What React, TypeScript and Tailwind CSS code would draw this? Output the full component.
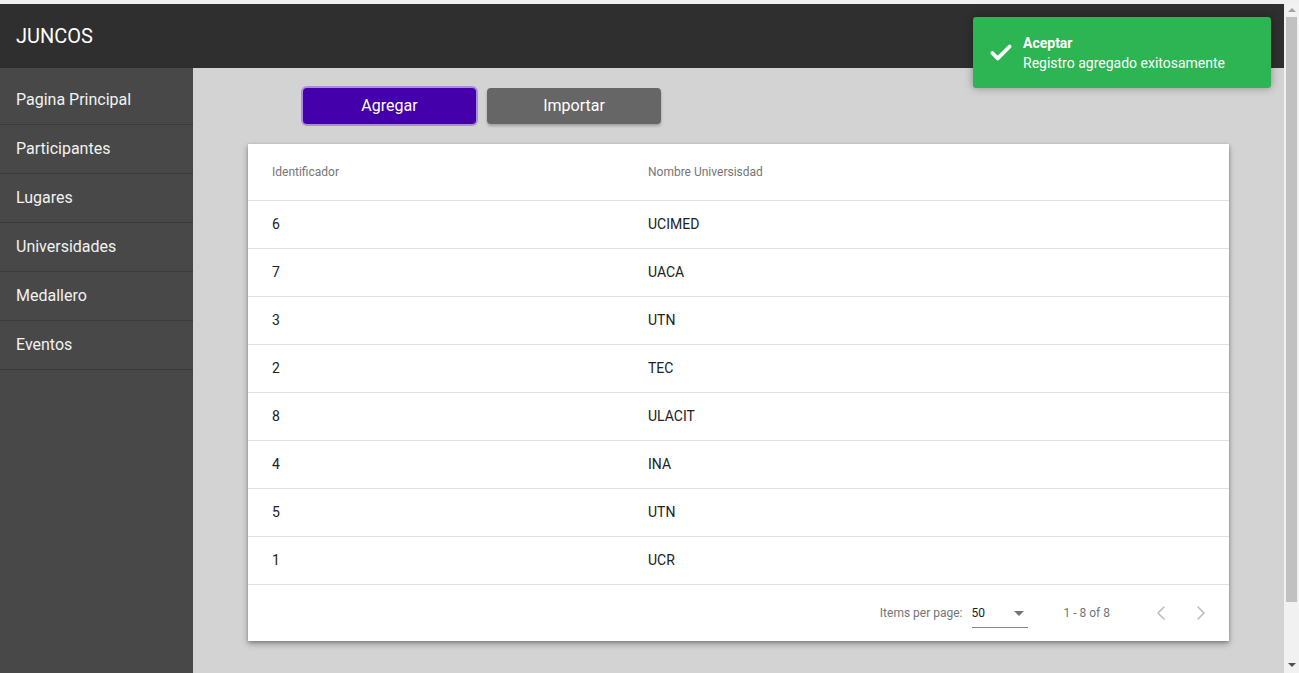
import { Check, ChevronLeft, ChevronRight } from "lucide-react";

const menu = ["Pagina Principal", "Participantes", "Lugares", "Universidades", "Medallero", "Eventos"];

const rows = [
  { id: 6, name: "UCIMED" },
  { id: 7, name: "UACA" },
  { id: 3, name: "UTN" },
  { id: 2, name: "TEC" },
  { id: 8, name: "ULACIT" },
  { id: 4, name: "INA" },
  { id: 5, name: "UTN" },
  { id: 1, name: "UCR" },
];

export default function App() {
  return (
    <div className="relative flex h-[673px] w-[1299px] flex-col overflow-hidden bg-[#f0f0f0] font-['Roboto',sans-serif]">
      <div className="h-[4px] shrink-0" />
      <div className="flex min-h-0 flex-1">
        <div className="flex min-w-0 flex-1 flex-col">
          {/* Toolbar */}
          <header className="flex h-[64px] shrink-0 items-center bg-[#2f2f2f] px-[16px]">
            <span className="text-[20px] text-white">JUNCOS</span>
          </header>

          <div className="flex min-h-0 flex-1">
            {/* Sidebar */}
            <nav className="w-[193px] shrink-0 bg-[#484848] pt-[8px]">
              {menu.map((item) => (
                <div
                  key={item}
                  className="flex h-[49px] items-center border-b border-[#3b3b3b] px-[16px] text-[16px] text-[#f2f2f2]"
                >
                  {item}
                </div>
              ))}
            </nav>

            {/* Content */}
            <main className="min-w-0 flex-1 bg-[#d3d3d3]">
              <div className="flex gap-[11px] pl-[110px] pt-[20px]">
                <button className="h-[36px] w-[173px] rounded-[4px] bg-[#4400aa] text-[16px] text-white ring-2 ring-[#a98ee0]">
                  Agregar
                </button>
                <button className="h-[36px] w-[174px] rounded-[4px] bg-[#666666] text-[16px] text-white shadow-[0_2px_3px_rgba(0,0,0,0.25)]">
                  Importar
                </button>
              </div>

              <div className="mx-[55px] mt-[20px] bg-white shadow-[0_3px_6px_rgba(0,0,0,0.3),0_1px_3px_rgba(0,0,0,0.2)]">
                <div className="flex h-[57px] items-center border-b border-[#e0e0e0] px-[24px] text-[12px] text-[#757575]">
                  <div className="w-[376px]">Identificador</div>
                  <div>Nombre Universisdad</div>
                </div>
                {rows.map((r, i) => (
                  <div
                    key={i}
                    className="flex h-[48px] items-center border-b border-[#e0e0e0] px-[24px] text-[14px] text-[#212121]"
                  >
                    <div className="w-[376px]">{r.id}</div>
                    <div>{r.name}</div>
                  </div>
                ))}
                <div className="flex h-[56px] items-center justify-end pr-[16px] text-[12px] text-[#757575]">
                  <span>Items per page:</span>
                  <div className="ml-[9px] mt-[2px] flex h-[27px] w-[56px] items-center justify-between border-b border-[#8a8a8a] pb-[1px] text-[#212121]">
                    <span>50</span>
                    <svg width="10" height="5" viewBox="0 0 10 5" className="mr-[4px]">
                      <path d="M0 0 L10 0 L5 5 Z" fill="#757575" />
                    </svg>
                  </div>
                  <span className="ml-[36px]">1 - 8 of 8</span>
                  <div className="ml-[39px] flex gap-[16px] text-[#bdbdbd]">
                    <ChevronLeft size={24} strokeWidth={1.6} />
                    <ChevronRight size={24} strokeWidth={1.6} />
                  </div>
                </div>
              </div>
            </main>
          </div>
        </div>

        {/* Scrollbar */}
        <div className="flex w-[15px] shrink-0 flex-col items-center bg-[#f1f1f1]">
          <svg width="8" height="4" viewBox="0 0 8 4" className="mt-[4px]">
            <path d="M0 4 L8 4 L4 0 Z" fill="#a3a3a3" />
          </svg>
          <div className="mt-[5px] h-[585px] w-[11px] bg-[#c1c1c1]" />
          <div className="flex-1" />
          <svg width="8" height="4" viewBox="0 0 8 4" className="mb-[6px]">
            <path d="M0 0 L8 0 L4 4 Z" fill="#505050" />
          </svg>
        </div>
      </div>

      {/* Toast */}
      <div className="absolute left-[973px] top-[17px] flex h-[71px] w-[298px] items-center rounded-[3px] bg-[#2db453] pl-[15px] text-white shadow-[0_0_8px_rgba(0,0,0,0.35)]">
        <Check size={26} strokeWidth={3.5} />
        <div className="ml-[9px] flex flex-col">
          <span className="text-[14px] font-bold leading-[20px]">Aceptar</span>
          <span className="text-[14px] leading-[20px]">Registro agregado exitosamente</span>
        </div>
      </div>
    </div>
  );
}
